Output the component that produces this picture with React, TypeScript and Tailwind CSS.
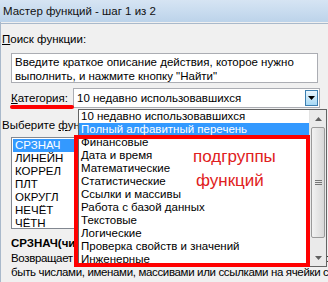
export default function App() {
  const cats = [
    "10 недавно использовавшихся",
    "Полный алфавитный перечень",
    "Финансовые",
    "Дата и время",
    "Математические",
    "Статистические",
    "Ссылки и массивы",
    "Работа с базой данных",
    "Текстовые",
    "Логические",
    "Проверка свойств и значений",
    "Инженерные",
  ];
  const funcs = ["СРЗНАЧ", "ЛИНЕЙН", "КОРРЕЛ", "ПЛТ", "ОКРУГЛ", "НЕЧЁТ", "ЧЁТН"];
  return (
    <div className="relative w-[328px] h-[282px] overflow-hidden bg-[#f0f0f0] text-[11.5px] leading-[14px] text-black font-['Liberation_Sans',Arial,sans-serif]">
      <div className="h-[22px] bg-gradient-to-b from-[#d6e4f3] via-[#c9dcef] to-[#bcd3ea] pl-[3px] flex items-center text-[#111]">
        Мастер функций - шаг 1 из 2
      </div>
      <div className="flex h-[260px]">
        <div className="w-[5px] bg-[#d7e4f1] border-r border-[#a9b9cb]" />
        <div className="flex-1 border-t border-[#a9b9cb] mt-[1px] flex flex-col">
          <div className="pl-[1px] mt-[8px]">
            <span className="underline">П</span>оиск функции:
          </div>
          <div className="ml-[10px] mt-[7px] w-[307px] h-[30px] border border-[#abadb3] bg-white pl-[3px] pt-[1px] whitespace-nowrap">
            <div>Введите краткое описание действия, которое нужно</div>
            <div>выполнить, и нажмите кнопку "Найти"</div>
          </div>
          <div className="flex items-center mt-[5px] h-[20px]">
            <div className="ml-[10px] w-[62px]">
              <span className="underline">К</span>атегория:
            </div>
            <div className="w-[247px] h-[20px] border border-[#abadb3] bg-white flex items-center pl-[3px] relative">
              <span>10 недавно использовавшихся</span>
              <div className="absolute right-[1px] top-[1px] w-[13px] h-[16px] border border-[#3c7fb1] bg-gradient-to-b from-[#eaf6fd] to-[#a7d9f5] flex items-center justify-center">
                <svg width="7" height="4" viewBox="0 0 7 4"><path d="M0 0h7L3.5 4z" fill="#000" /></svg>
              </div>
            </div>
          </div>
          <div className="pl-[1px] mt-[10px]">
            Выберите <span className="underline">ф</span>ункцию:
          </div>
          <div className="ml-[10px] mt-[5px] w-[300px] h-[92px] border border-[#828790] bg-white p-[1px]">
            {funcs.map((f, i) => (
              <div key={f} className={`h-[13px] leading-[13px] pl-[2px] ${i === 0 ? "bg-[#3399ff] text-white" : ""}`}>
                {f}
              </div>
            ))}
          </div>
          <div className="ml-[10px] mt-[7px] font-bold whitespace-nowrap">СРЗНАЧ(число1;число2;...)</div>
          <div className="ml-[10px] mt-[1px] whitespace-nowrap tracking-[-0.35px]">Возвращает среднее арифметическое своих аргументов, которые могут</div>
          <div className="ml-[10px] whitespace-nowrap tracking-[-0.35px]">быть числами, именами, массивами или ссылками на ячейки с</div>
        </div>
      </div>

      {/* dropdown list overlay */}
      <div className="absolute left-[78px] top-[109px] w-[249px] h-[158px] border border-[#646464] bg-white">
        <div className="absolute left-0 top-0 right-[17px]">
          {cats.map((c, i) => (
            <div key={c} className={`h-[13px] leading-[13px] pl-[2px] whitespace-nowrap ${i === 1 ? "bg-[#3399ff] text-white" : ""}`}>
              {c}
            </div>
          ))}
        </div>
        <div className="absolute right-0 top-0 bottom-0 w-[17px] bg-[#eaeaea] border-l border-[#e3e3e3] flex flex-col">
          <div className="h-[17px] flex items-center justify-center">
            <svg width="7" height="4" viewBox="0 0 7 4"><path d="M0 4h7L3.5 0z" fill="#606060" /></svg>
          </div>
          <div className="mx-[1px] h-[111px] rounded-[2px] border border-[#9a9a9a] bg-gradient-to-r from-[#f2f2f2] to-[#d8d8d8] flex items-center justify-center">
            <div className="flex flex-col gap-[1px]">
              <div className="w-[7px] h-[1px] bg-[#777]" />
              <div className="w-[7px] h-[1px] bg-[#777]" />
              <div className="w-[7px] h-[1px] bg-[#777]" />
            </div>
          </div>
          <div className="flex-1" />
          <div className="h-[17px] flex items-center justify-center">
            <svg width="7" height="4" viewBox="0 0 7 4"><path d="M0 0h7L3.5 4z" fill="#606060" /></svg>
          </div>
        </div>
      </div>

      {/* red annotations */}
      <div className="absolute left-[74px] top-[135px] w-[236px] h-[132px] border-[4px] border-[#ff0000]" />
      <div className="absolute left-[193px] top-[146px] text-[17px] leading-[22px] text-[#e02020] font-['Liberation_Sans',Arial,sans-serif]">
        <div>подгруппы</div>
        <div className="pl-[3px] mt-[2px]">функций</div>
      </div>
      <div className="absolute left-[10px] top-[105px] w-[64px] h-[4px] rounded-full bg-[#ff0000]" />
    </div>
  );
}
